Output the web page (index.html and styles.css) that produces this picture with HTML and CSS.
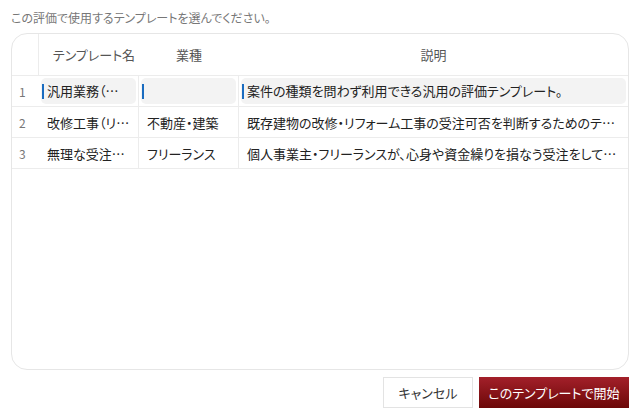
FILE: index.html
```html
<!DOCTYPE html>
<html lang="ja">
<head>
<meta charset="utf-8">
<title>テンプレート選択</title>
<link rel="stylesheet" href="styles.css">
</head>
<body>
<div class="page">
  <div class="hint">この評価で使用するテンプレートを選んでください。</div>
  <div class="grid">
    <div class="row head">
      <div class="cell num"></div>
      <div class="cell c1"><span class="htxt">テンプレート名</span></div>
      <div class="cell c2"><span class="htxt">業種</span></div>
      <div class="cell c3"><span class="htxt">説明</span></div>
    </div>
    <div class="row sel">
      <div class="cell num">1</div>
      <div class="cell c1"><span class="edit">汎用業務（標準）</span></div>
      <div class="cell c2"><span class="edit"></span></div>
      <div class="cell c3"><span class="edit">案件の種類を問わず利用できる汎用の評価テンプレート。</span></div>
    </div>
    <div class="row">
      <div class="cell num">2</div>
      <div class="cell c1"><span class="txt">改修工事（リフォーム）</span></div>
      <div class="cell c2"><span class="txt">不動産・建築</span></div>
      <div class="cell c3"><span class="txt">既存建物の改修・リフォーム工事の受注可否を判断するためのテンプレート。</span></div>
    </div>
    <div class="row">
      <div class="cell num">3</div>
      <div class="cell c1"><span class="txt">無理な受注チェック</span></div>
      <div class="cell c2"><span class="txt">フリーランス</span></div>
      <div class="cell c3"><span class="txt">個人事業主・フリーランスが、心身や資金繰りを損なう受注をしていないか確認するためのテンプレート。</span></div>
    </div>
  </div>
  <div class="actions">
    <button class="btn cancel">キャンセル</button>
    <button class="btn primary">このテンプレートで開始</button>
  </div>
</div>
</body>
</html>
```

FILE: styles.css
```css
html, body {
  margin: 0;
  padding: 0;
  background: #ffffff;
}
body {
  font-family: "Noto Sans CJK JP", "Noto Sans", sans-serif;
  font-feature-settings: "palt";
  color: #222;
}
.page {
  box-sizing: border-box;
  height: 420px;
  padding: 10px 11px 12px 11px;
  display: flex;
  flex-direction: column;
}
.hint {
  font-size: 12px;
  line-height: 16px;
  color: #777;
  margin-bottom: 7px;
}
.grid {
  flex: 1;
  border: 1px solid #e6e6e6;
  border-radius: 16px;
  overflow: hidden;
  background: #fff;
}
.row {
  display: grid;
  grid-template-columns: 27px 100px 100px 1fr;
  height: 30px;
  border-bottom: 1px solid #ececec;
  font-size: 13px;
}
.row.head {
  height: 41px;
  color: #555;
}
.cell {
  display: flex;
  align-items: center;
  min-width: 0;
  overflow: hidden;
  box-sizing: border-box;
}
.row .cell.c1, .row .cell.c2 {
  border-right: 1px solid #ececec;
}
.row.head .cell.c1, .row.head .cell.c2 {
  border-right: none;
}
.row.head .cell {
  justify-content: center;
}
.row.head .cell.c1 {
  padding-left: 10px;
}
.row.head .cell.num {
  border-right: 1px solid #ececec;
}
.htxt {
  white-space: nowrap;
}
.cell.num {
  color: #777;
  font-size: 12px;
  padding-left: 7px;
}
.txt {
  display: block;
  flex: 1;
  padding: 0 8px 0 8px;
  white-space: nowrap;
  overflow: hidden;
  text-overflow: ellipsis;
  min-width: 0;
}
.row.sel .cell {
  padding: 2px 2px 2px 2px;
}
.row.sel .cell.num {
  padding-left: 7px;
}
.edit {
  display: block;
  flex: 1;
  align-self: stretch;
  min-width: 0;
  background: #f3f3f3;
  border-radius: 5px;
  padding: 0 6px 0 6px;
  line-height: 26px;
  white-space: nowrap;
  overflow: hidden;
  text-overflow: ellipsis;
}
.edit::before {
  content: "";
  display: inline-block;
  width: 2px;
  height: 15px;
  background: #1a6cc0;
  vertical-align: -3px;
  margin-left: -5px;
  margin-right: 3px;
}
.actions {
  display: flex;
  justify-content: flex-end;
  gap: 6px;
  margin-top: 7px;
}
.btn {
  font-family: "Noto Sans CJK JP", "Noto Sans", sans-serif;
  font-feature-settings: "palt";
  font-size: 13px;
  height: 31px;
  padding: 0;
  cursor: pointer;
}
.cancel {
  width: 90px;
  background: #fff;
  border: 1px solid #e3e3e3;
  color: #333;
}
.primary {
  width: 150px;
  border: none;
  color: #fff;
  background: linear-gradient(#a3202a, #6c0808);
}
```
